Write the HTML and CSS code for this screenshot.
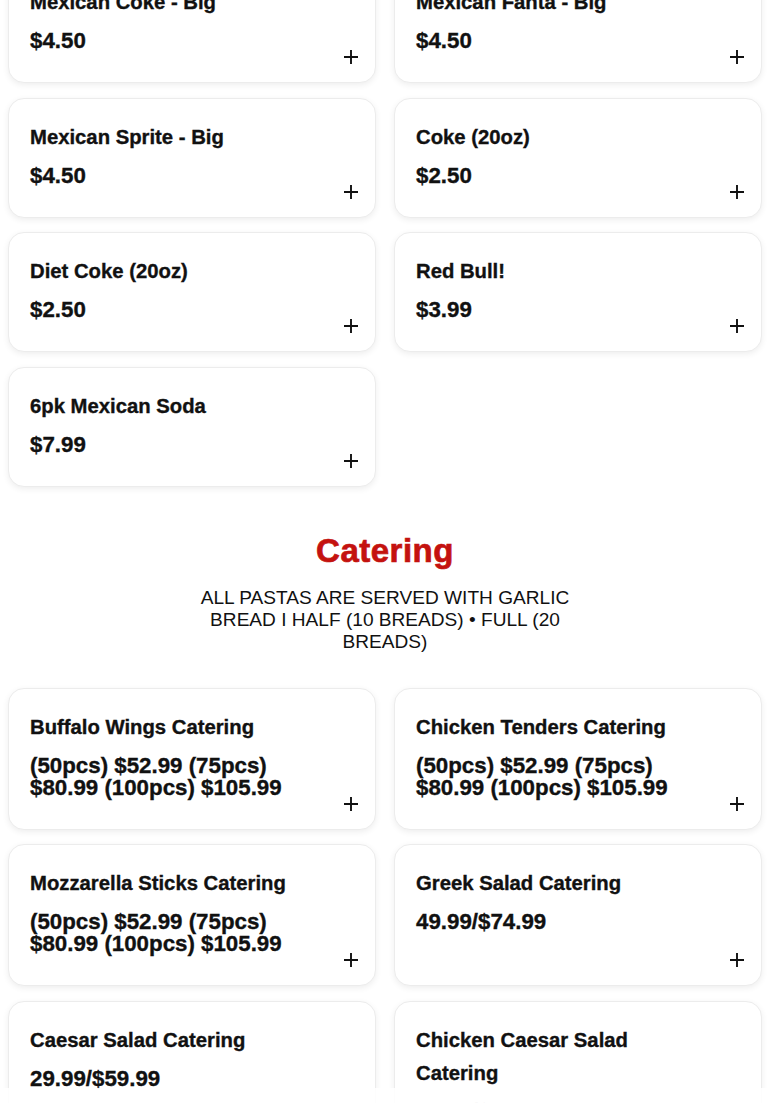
FILE: index.html
```html
<!DOCTYPE html>
<html lang="en">
<head>
  <meta charset="UTF-8">
  <meta name="viewport" content="width=device-width, initial-scale=1.0">
  <title>Menu</title>
  <link rel="stylesheet" href="styles.css">
</head>
<body>
  <div class="menu">
    <div class="grid drinks">
      <div class="card">
        <h3 class="item-name">Mexican Coke - Big</h3>
        <div class="item-price">$4.50</div>
        <button class="add" aria-label="Add"><svg viewBox="0 0 14 14"><path d="M7 0v14M0 7h14"/></svg></button>
      </div>
      <div class="card">
        <h3 class="item-name">Mexican Fanta - Big</h3>
        <div class="item-price">$4.50</div>
        <button class="add" aria-label="Add"><svg viewBox="0 0 14 14"><path d="M7 0v14M0 7h14"/></svg></button>
      </div>
      <div class="card">
        <h3 class="item-name">Mexican Sprite - Big</h3>
        <div class="item-price">$4.50</div>
        <button class="add" aria-label="Add"><svg viewBox="0 0 14 14"><path d="M7 0v14M0 7h14"/></svg></button>
      </div>
      <div class="card">
        <h3 class="item-name">Coke (20oz)</h3>
        <div class="item-price">$2.50</div>
        <button class="add" aria-label="Add"><svg viewBox="0 0 14 14"><path d="M7 0v14M0 7h14"/></svg></button>
      </div>
      <div class="card">
        <h3 class="item-name">Diet Coke (20oz)</h3>
        <div class="item-price">$2.50</div>
        <button class="add" aria-label="Add"><svg viewBox="0 0 14 14"><path d="M7 0v14M0 7h14"/></svg></button>
      </div>
      <div class="card">
        <h3 class="item-name">Red Bull!</h3>
        <div class="item-price">$3.99</div>
        <button class="add" aria-label="Add"><svg viewBox="0 0 14 14"><path d="M7 0v14M0 7h14"/></svg></button>
      </div>
      <div class="card">
        <h3 class="item-name">6pk Mexican Soda</h3>
        <div class="item-price">$7.99</div>
        <button class="add" aria-label="Add"><svg viewBox="0 0 14 14"><path d="M7 0v14M0 7h14"/></svg></button>
      </div>
    </div>

    <div class="section-head">
      <h2>Catering</h2>
      <p>All pastas are served with garlic bread I Half (10 breads) • Full (20 breads)</p>
    </div>

    <div class="grid">
      <div class="card">
        <h3 class="item-name">Buffalo Wings Catering</h3>
        <div class="item-price">(50pcs) $52.99 (75pcs) $80.99 (100pcs) $105.99</div>
        <button class="add" aria-label="Add"><svg viewBox="0 0 14 14"><path d="M7 0v14M0 7h14"/></svg></button>
      </div>
      <div class="card">
        <h3 class="item-name">Chicken Tenders Catering</h3>
        <div class="item-price">(50pcs) $52.99 (75pcs) $80.99 (100pcs) $105.99</div>
        <button class="add" aria-label="Add"><svg viewBox="0 0 14 14"><path d="M7 0v14M0 7h14"/></svg></button>
      </div>
      <div class="card">
        <h3 class="item-name">Mozzarella Sticks Catering</h3>
        <div class="item-price">(50pcs) $52.99 (75pcs) $80.99 (100pcs) $105.99</div>
        <button class="add" aria-label="Add"><svg viewBox="0 0 14 14"><path d="M7 0v14M0 7h14"/></svg></button>
      </div>
      <div class="card">
        <h3 class="item-name">Greek Salad Catering</h3>
        <div class="item-price">49.99/$74.99</div>
        <button class="add" aria-label="Add"><svg viewBox="0 0 14 14"><path d="M7 0v14M0 7h14"/></svg></button>
      </div>
      <div class="card">
        <h3 class="item-name">Caesar Salad Catering</h3>
        <div class="item-price">29.99/$59.99</div>
        <button class="add" aria-label="Add"><svg viewBox="0 0 14 14"><path d="M7 0v14M0 7h14"/></svg></button>
      </div>
      <div class="card">
        <h3 class="item-name">Chicken Caesar Salad Catering</h3>
        <div class="item-price">39.99/$79.99</div>
        <button class="add" aria-label="Add"><svg viewBox="0 0 14 14"><path d="M7 0v14M0 7h14"/></svg></button>
      </div>
    </div>
  </div>
  <div class="bottom-fade"></div>
</body>
</html>
```

FILE: styles.css
```css
body {
  font-family: "Liberation Sans", Arial, sans-serif;
  margin: 0;
  padding: 0;
  background-color: #ffffff;
  color: #111;
}
.menu {
  padding: 0 8px 40px;
}
.grid {
  display: grid;
  grid-template-columns: 1fr 1fr;
  column-gap: 18px;
  row-gap: 14.5px;
}
.drinks {
  margin-top: -37px;
}
.card {
  position: relative;
  background: #ffffff;
  border: 1px solid #ececec;
  border-radius: 16px;
  box-shadow: 0 2px 6px rgba(0, 0, 0, 0.07);
  padding: 22px 22px 30px 21px;
}
.item-name {
  margin: 0;
  font-size: 20.3px;
  font-weight: bold;
  line-height: 33px;
  padding-right: 36px;
  -webkit-text-stroke: 0.35px #111;
}
.item-price {
  margin-top: 11px;
  font-size: 22.3px;
  font-weight: bold;
  line-height: 22px;
  padding-right: 40px;
  -webkit-text-stroke: 0.35px #111;
}
.add {
  position: absolute;
  right: 16px;
  bottom: 17px;
  width: 16px;
  height: 16px;
  padding: 1px;
  border: 0;
  background: none;
}
.add svg {
  display: block;
  width: 14px;
  height: 14px;
  stroke: #111;
  stroke-width: 1.9;
  fill: none;
}
.section-head {
  text-align: center;
  padding: 44px 0 35px;
}
.section-head h2 {
  margin: 0 0 16px;
  font-size: 33px;
  line-height: 40px;
  letter-spacing: 0.5px;
  color: #c4120f;
  -webkit-text-stroke: 0.7px #c4120f;
}
.section-head p {
  margin: 0 auto;
  max-width: 382px;
  font-size: 19.1px;
  line-height: 22px;
  text-transform: uppercase;
}
.bottom-fade {
  position: fixed;
  left: 0;
  right: 0;
  bottom: 0;
  height: 15px;
  background: rgba(255, 255, 255, 0.9);
}
```
